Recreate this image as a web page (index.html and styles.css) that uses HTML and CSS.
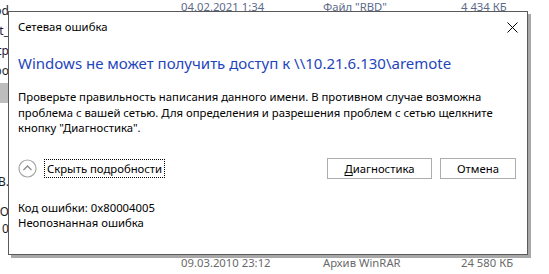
FILE: index.html
```html
<!DOCTYPE html>
<html lang="ru">
<head>
    <meta charset="UTF-8">
    <title>Сетевая ошибка</title>
    <link rel="stylesheet" href="styles.css">
</head>
<body>
    <div class="desktop">
        <!-- explorer list behind the dialog -->
        <div class="explorer">
            <div class="left-strip">
                <div class="frag f1"><span>Method</span></div>
                <div class="frag f2"><span>text_</span></div>
                <div class="frag f3"><span>http</span></div>
                <div class="frag f4"><span>Robo</span></div>
                <div class="frag sel"></div>
                <div class="frag f5"><span>ФИО В.</span></div>
                <div class="frag f6"><span>ЭКО</span></div>
                <div class="frag f7"><span>2010</span></div>
            </div>
            <div class="file-row row-top">
                <span class="col-date">04.02.2021 1:34</span>
                <span class="col-type">Файл "RBD"</span>
                <span class="col-size">4 434 КБ</span>
            </div>
            <div class="file-row row-bottom">
                <span class="col-date">09.03.2010 23:12</span>
                <span class="col-type">Архив WinRAR</span>
                <span class="col-size">24 580 КБ</span>
            </div>
        </div>

        <div class="dialog">
            <div class="dialog-header">
                <span class="dialog-title">Сетевая ошибка</span>
                <span class="close-btn">
                    <svg width="11" height="11" viewBox="0 0 11 11">
                        <path d="M0.5 0.5 L10.5 10.5 M10.5 0.5 L0.5 10.5" stroke="#000" stroke-width="1" fill="none"/>
                    </svg>
                </span>
            </div>
            <div class="main-instruction">Windows не может получить доступ к \\10.21.6.130\aremote</div>
            <div class="content-text">Проверьте правильность написания данного имени. В противном случае возможна<br>проблема с вашей сетью. Для определения и разрешения проблем с сетью щелкните<br>кнопку "Диагностика".</div>
            <div class="action-row">
                <div class="expander">
                    <svg class="expander-icon" width="19" height="19" viewBox="0 0 19 19">
                        <circle cx="9.5" cy="9.5" r="8.5" stroke="#a6a6a6" stroke-width="1.2" fill="none"/>
                        <path d="M5.5 11 L9.5 7 L13.5 11" stroke="#8a8a8a" stroke-width="1.3" fill="none"/>
                    </svg>
                    <span class="expander-label">Скрыть подробности</span>
                </div>
                <div class="buttons">
                    <button class="btn btn-diag"><span class="accel">Д</span>иагностика</button>
                    <button class="btn btn-cancel">Отмена</button>
                </div>
            </div>
            <div class="details">
                <div>Код ошибки: 0x80004005</div>
                <div>Неопознанная ошибка</div>
            </div>
        </div>
    </div>
</body>
</html>
```

FILE: styles.css
```css
body, html {
    margin: 0;
    padding: 0;
    width: 549px;
    height: 274px;
    overflow: hidden;
    background: #fff;
    font-family: "Noto Sans", "Open Sans", sans-serif;
    font-size: 11.3px;
}

.desktop {
    position: relative;
    width: 549px;
    height: 274px;
}

/* background explorer window */
.explorer {
    position: absolute;
    top: 0;
    left: 0;
    width: 100%;
    height: 100%;
    color: #1e1e1e;
}

.left-strip {
    width: 9px;
    display: flex;
    flex-direction: column;
    font-size: 12px;
}

.frag {
    display: flex;
    justify-content: flex-end;
    height: 20px;
    line-height: 20px;
    white-space: nowrap;
}

.f1 { margin-top: 1px; }
.f2 { color: #2a1a40; }
.f3 { color: #2a1a40; }
.sel {
    background: #bdbdbd;
    margin-top: 2px;
    width: 8px;
}
.f5 { margin-top: 69px; }
.f6 { margin-top: 10px; }
.f7 { margin-top: -3px; }

.file-row {
    position: absolute;
    left: 0;
    width: 100%;
    display: flex;
    color: #6a6a6a;
    white-space: nowrap;
    line-height: 16px;
}

.row-top {
    top: -1px;
    color: #5b6a8a;
}

.row-bottom {
    top: 255px;
}

.col-date {
    margin-left: 181px;
    width: 142px;
}

.col-type {
    width: 138px;
}

/* the dialog window */
.dialog {
    position: absolute;
    left: 8px;
    top: 11px;
    width: 520px;
    height: 244px;
    box-sizing: border-box;
    background: #fff;
    border: 1px solid #5a5a5a;
    box-shadow: 3px 3px 0 #a8a8a8;
    display: flex;
    flex-direction: column;
    padding: 0 11px 0 9px;
    color: #000;
}

.dialog-header {
    display: flex;
    justify-content: space-between;
    align-items: center;
    padding-top: 7px;
    height: 16px;
    line-height: 16px;
}

.dialog-title {
    color: #000;
}

.close-btn {
    display: flex;
    margin-right: -2px;
    margin-top: 1px;
}

.main-instruction {
    margin-top: 17px;
    font-size: 15px;
    line-height: 22px;
    color: #1f45bd;
    white-space: nowrap;
}

.content-text {
    margin-top: 15px;
    line-height: 15.5px;
    white-space: nowrap;
}

.action-row {
    display: flex;
    justify-content: space-between;
    align-items: center;
    margin-top: 22px;
    height: 21px;
}

.expander {
    display: flex;
    align-items: center;
    gap: 8px;
}

.expander-icon {
    display: block;
}

.expander-label {
    outline: 1px dotted #000;
    outline-offset: 0;
    padding: 1px 2px;
    line-height: 15px;
}

.buttons {
    display: flex;
    gap: 8px;
}

.btn {
    font-family: inherit;
    font-size: 11.3px;
    height: 21px;
    padding: 0;
    box-sizing: border-box;
    background: #fff;
    border: 1px solid #adadad;
    color: #000;
    line-height: 17px;
}

.accel {
    text-decoration: underline;
    text-underline-offset: 2px;
}

.btn-diag {
    width: 105px;
}

.btn-cancel {
    width: 76px;
}

.details {
    margin-top: 21px;
    line-height: 15px;
}
```
